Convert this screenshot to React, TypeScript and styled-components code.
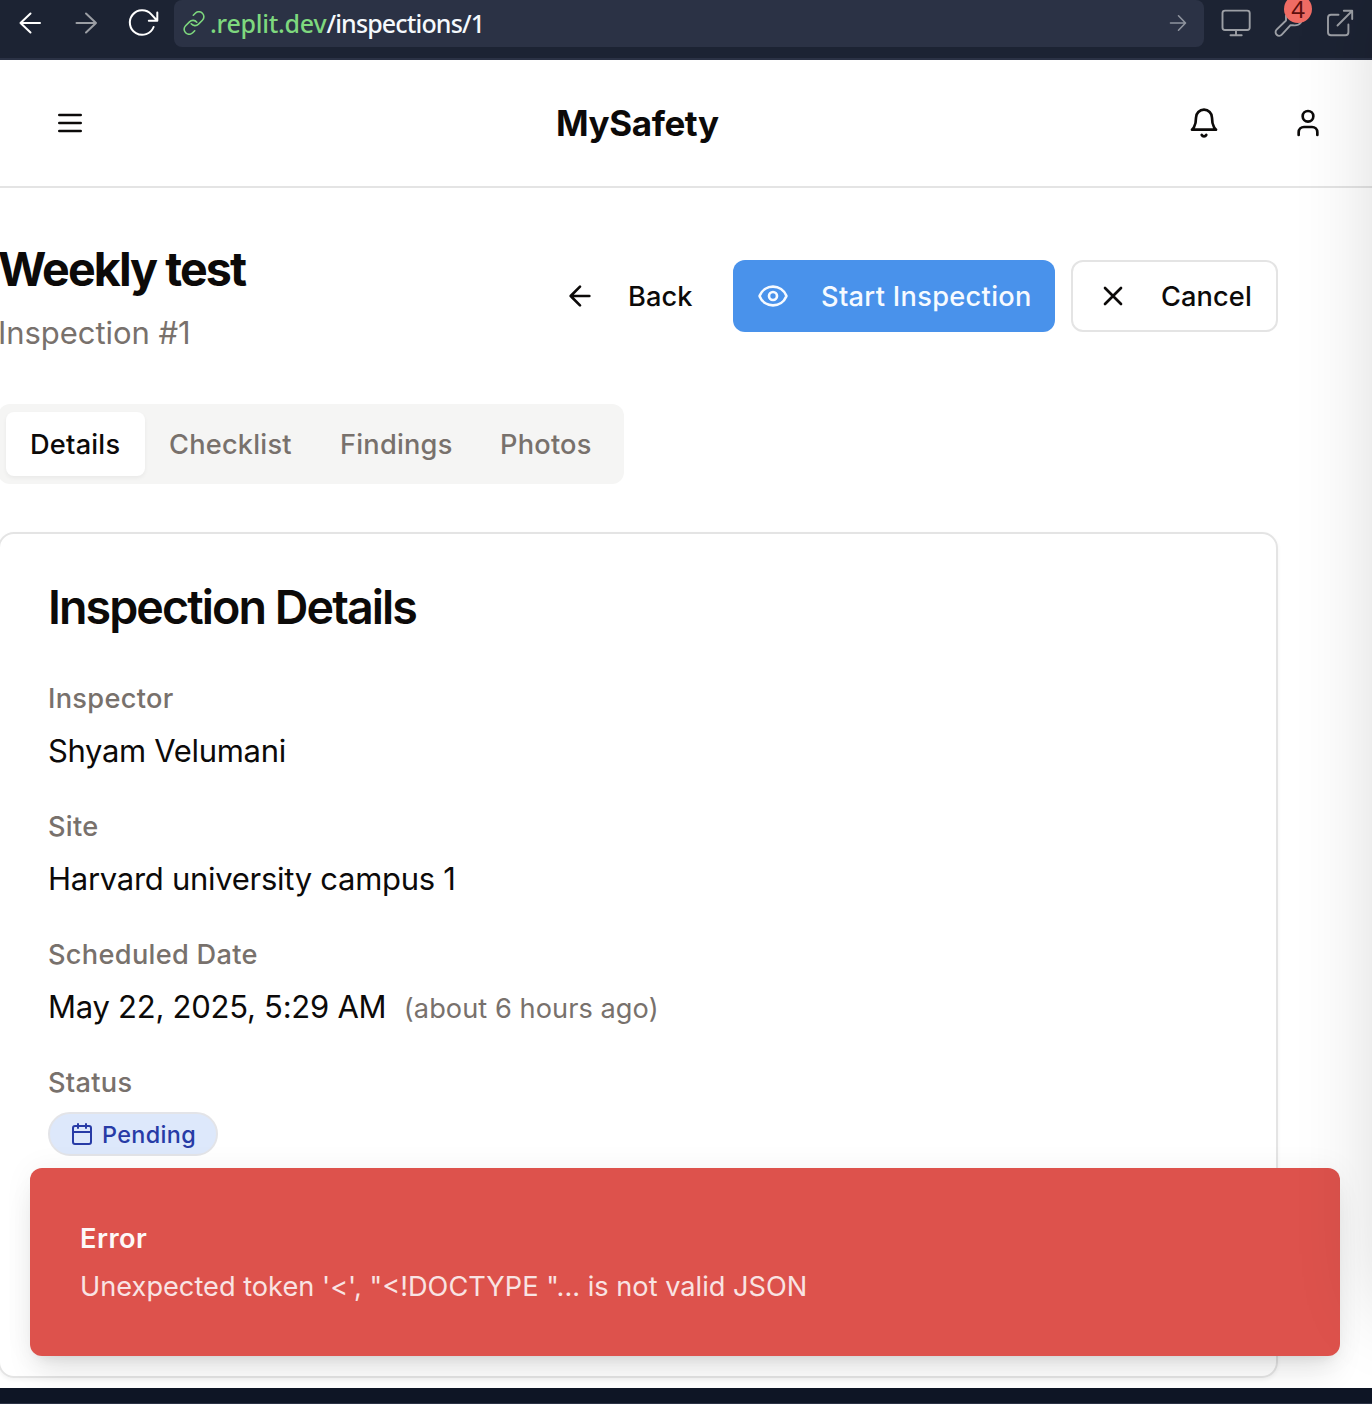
import React from "react";
import styled, { createGlobalStyle } from "styled-components";

const ink = "#0c0a09";
const muted = "#78716c";
const line = "#e4e4e4";

const GlobalStyle = createGlobalStyle`
  * { box-sizing: border-box; }
  html, body { margin: 0; padding: 0; overflow: hidden; background: #fff; }
  body { font-family: Inter, "Liberation Sans", sans-serif; color: ${ink}; }
  h1, h2, p { margin: 0; }
  button { font: inherit; color: inherit; margin: 0; }
  svg { display: block; flex: none; }
`;

const Screen = styled.div`
  position: relative;
  width: 1372px;
  height: 1404px;
  overflow: hidden;
  display: flex;
  flex-direction: column;
`;

const BrowserBar = styled.div`
  height: 60px;
  flex: none;
  display: flex;
  align-items: flex-start;
  background: #1c2333;
  border-bottom: 2px solid #2b3245;
`;

const NavButtons = styled.div`
  display: flex;
  width: 174px;
  height: 47px;
  color: #fff;
`;

const AddressField = styled.div`
  width: 1030px;
  height: 47px;
  display: flex;
  align-items: center;
  padding: 0 16px 1px 8px;
  background: #2b3245;
  border-radius: 8px;
`;

const Address = styled.div`
  flex: 1;
  margin-left: 4px;
  font-family: "Noto Sans", sans-serif;
  font-size: 25px;
  line-height: 34px;
  font-weight: 500;
  letter-spacing: -0.85px;
  color: #f5f9fc;
  white-space: nowrap;
`;

const Host = styled.span`
  color: #7ed87e;
  letter-spacing: -0.25px;
`;

const Tools = styled.div`
  position: relative;
  display: flex;
  height: 47px;
`;

const CountBadge = styled.span`
  position: absolute;
  left: 80px;
  top: -5px;
  width: 28px;
  height: 28px;
  border-radius: 50%;
  background: #ef6c64;
  color: #5c0f0d;
  font-family: "Noto Sans", sans-serif;
  font-size: 24px;
  line-height: 28px;
  text-align: center;
`;

const AppHeader = styled.header`
  height: 128px;
  flex: none;
  display: flex;
  align-items: center;
  padding: 2px 48px 2px 54px;
  border-bottom: 2px solid ${line};
`;

const Brand = styled.div`
  flex: 1;
  margin-left: 470px;
  font-size: 35px;
  line-height: 56px;
  font-weight: 700;
  letter-spacing: -0.41px;
`;

const HeaderIcons = styled.div`
  display: flex;
  gap: 72px;
`;

const Page = styled.main`
  flex: 1;
  min-height: 0;
  width: 1280px;
  margin-left: -2px;
  padding: 48px 0 10px;
  display: flex;
  flex-direction: column;
  gap: 48px;
`;

const TitleRow = styled.div`
  display: flex;
  align-items: center;
  justify-content: space-between;
  height: 120px;
`;

const TitleBlock = styled.div`
  display: flex;
  flex-direction: column;
  gap: 8px;
  padding-top: 1px;
`;

const Title = styled.h1`
  font-size: 46.6px;
  line-height: 64px;
  font-weight: 700;
  letter-spacing: -1.92px;
  white-space: nowrap;
`;

const Subtitle = styled.p`
  font-size: 31px;
  line-height: 48px;
  letter-spacing: -0.05px;
  color: ${muted};
`;

const Actions = styled.div`
  display: flex;
  gap: 16px;
`;

const Button = styled.button<{ $kind: "ghost" | "primary" | "outline"; $w: number; $track: number }>`
  display: flex;
  align-items: center;
  gap: 32px;
  width: ${(p) => p.$w}px;
  height: 72px;
  padding: 0 ${(p) => (p.$kind === "ghost" ? 24 : 22)}px 0 24px;
  border-radius: 12px;
  border: ${(p) => (p.$kind === "outline" ? `2px solid ${line}` : "0")};
  background: ${(p) => (p.$kind === "primary" ? "#4992eb" : "transparent")};
  color: ${(p) => (p.$kind === "primary" ? "#f6faff" : ink)};
  font-size: 27.2px;
  line-height: 40px;
  font-weight: 500;
  letter-spacing: ${(p) => p.$track}px;
  white-space: nowrap;
`;

const ButtonLabel = styled.span`
  padding-top: 2px;
`;

const TabList = styled.div`
  display: flex;
  flex: none;
  width: 626px;
  height: 80px;
  padding: 8px;
  border-radius: 12px;
  background: #f5f5f4;
`;

const Tab = styled.button<{ $active?: boolean; $w: number }>`
  width: ${(p) => p.$w}px;
  height: 64px;
  padding: 2px 0 0 24px;
  border: 0;
  border-radius: 8px;
  text-align: left;
  font-size: 27.2px;
  line-height: 40px;
  font-weight: 500;
  letter-spacing: 0.22px;
  white-space: nowrap;
  color: ${(p) => (p.$active ? ink : muted)};
  background: ${(p) => (p.$active ? "#fff" : "transparent")};
  box-shadow: ${(p) => (p.$active ? "0 2px 4px rgba(0,0,0,.05)" : "none")};
`;

const Card = styled.section`
  height: 846px;
  flex: none;
  padding: 48px;
  border: 2px solid ${line};
  border-radius: 16px;
  box-shadow: 0 2px 4px rgba(0, 0, 0, 0.05);
`;

const CardTitle = styled.h2`
  padding-top: 1px;
  font-size: 46.6px;
  line-height: 48px;
  font-weight: 600;
  letter-spacing: -1.93px;
  margin-bottom: 48px;
`;

const Fields = styled.div`
  display: flex;
  flex-direction: column;
  gap: 32px;
`;

const Field = styled.div`
  display: flex;
  flex-direction: column;
  align-items: flex-start;
  gap: 8px;
`;

const Label = styled.div`
  font-size: 27.2px;
  line-height: 40px;
  font-weight: 500;
  letter-spacing: 0.3px;
  color: ${muted};
`;

const Value = styled.div<{ $track: number }>`
  height: 48px;
  font-size: 31px;
  line-height: 48px;
  letter-spacing: ${(p) => p.$track}px;
  white-space: nowrap;
`;

const Ago = styled.span`
  margin-left: 17.5px;
  font-size: 27.2px;
  line-height: 40px;
  letter-spacing: 0.05px;
  color: ${muted};
`;

const StatusPill = styled.span`
  display: flex;
  align-items: center;
  gap: 8px;
  width: 170px;
  height: 44px;
  margin-top: 1px;
  padding-left: 20px;
  border: 2px solid #e3e4e8;
  border-radius: 22px;
  background: #dde8fb;
  color: #273ba6;
  font-size: 23.4px;
  font-weight: 500;
  letter-spacing: 0.36px;
`;

const Toast = styled.div`
  position: absolute;
  left: 30px;
  top: 1168px;
  width: 1310px;
  height: 188px;
  padding: 51px 50px 49px;
  border-radius: 12px;
  display: flex;
  flex-direction: column;
  gap: 8px;
  background: #dd524c;
  color: #fdf8f8;
  box-shadow: 0 20px 30px -6px rgba(0, 0, 0, 0.1), 0 8px 12px -8px rgba(0, 0, 0, 0.1), 0 0 30px rgba(0, 0, 0, 0.05);
  font-size: 27.2px;
  line-height: 40px;
`;

const ToastTitle = styled.div`
  font-weight: 600;
  letter-spacing: 0.45px;
`;

const ToastText = styled.div`
  opacity: 0.88;
  letter-spacing: 0;
  white-space: nowrap;
`;

const EdgeShade = styled.div`
  position: absolute;
  inset: 0;
  overflow: hidden;
  pointer-events: none;
  &::after {
    content: "";
    position: absolute;
    left: calc(100% + 6px);
    top: -20px;
    width: 200px;
    height: 1330px;
    box-shadow: 0 0 84px rgba(0, 0, 0, 0.16);
  }
`;

const BottomBar = styled.footer`
  height: 16px;
  flex: none;
  position: relative;
  background: #0e1525;
  border-bottom: 1px solid #2b3245;
`;

type IconProps = { size?: number; stroke?: number; children: React.ReactNode };

const Icon = ({ size = 32, stroke = 2, children }: IconProps) => (
  <svg width={size} height={size} viewBox="0 0 24 24" fill="none" stroke="currentColor" strokeWidth={stroke} strokeLinecap="round" strokeLinejoin="round">
    {children}
  </svg>
);

const BarNavIcons = () => (
  <svg width="174" height="47" viewBox="0 0 174 47" fill="none" stroke="#fff" strokeWidth="2" strokeLinecap="round" strokeLinejoin="round">
    <path d="M40 23H20.5M30.5 13.5L20.5 23L30.5 32.5" />
    <path stroke="#9b9ea4" d="M76.5 23H96M86 13.5L96 23L86 32.5" />
    <path d="M153.6 27A12.3 12.3 0 1 1 151.3 14.3L157 20.5M157.3 12.5V20.8H148.8" />
  </svg>
);

const LinkIcon = () => (
  <svg width="24" height="24" viewBox="0 0 24 24" fill="none" stroke="#7ed87e" strokeWidth="1.6" strokeLinecap="round" strokeLinejoin="round">
    <path d="M9.2 12.8a5 5 0 0 0 7.3.4l3.9-3.9a5 5 0 0 0-7.1-7.1L11.3 4.2" />
    <path d="M14.8 11.2a5 5 0 0 0-7.3-.4L3.6 14.7a5 5 0 0 0 7.1 7.1L12.7 19.8" />
  </svg>
);

const GoIcon = () => (
  <svg width="20" height="20" viewBox="0 0 20 20" fill="none" stroke="#8f949e" strokeWidth="1.6" strokeLinecap="round" strokeLinejoin="round">
    <path d="M2.5 10H17M10.5 2.8L17.5 10L10.5 17.2" />
  </svg>
);

const ToolIcons = () => (
  <svg width="168" height="47" viewBox="1204 0 168 47" fill="none" stroke="#9c9fa5" strokeWidth="1.9" strokeLinecap="round" strokeLinejoin="round">
    <rect x="1222.5" y="10.6" width="27.2" height="19.4" rx="2.5" />
    <path d="M1236 30V35M1230.5 35.2H1241.7" />
    <path d="M1286 15.5V20.5L1276.6 29.6A3.6 3.6 0 0 0 1281.8 34.6L1290.5 25.2H1293C1296 25.8 1299 24.8 1301 22.5" />
    <path d="M1338.5 14.8H1331A3 3 0 0 0 1328 17.8V32.2A3 3 0 0 0 1331 35.2H1345.4A3 3 0 0 0 1348.4 32.2V24.5M1337.5 25.5L1352 11M1343.8 10.8H1352.2V19" />
  </svg>
);

export default function App() {
  return (
    <>
      <GlobalStyle />
      <Screen>
        <BrowserBar>
          <NavButtons>
            <BarNavIcons />
          </NavButtons>
          <AddressField>
            <LinkIcon />
            <Address>
              <Host>.replit.dev</Host>/inspections/1
            </Address>
            <GoIcon />
          </AddressField>
          <Tools>
            <ToolIcons />
            <CountBadge>4</CountBadge>
          </Tools>
        </BrowserBar>

        <AppHeader>
          <Icon><path d="M4 6h16M4 12h16M4 18h16" /></Icon>
          <Brand>MySafety</Brand>
          <HeaderIcons>
            <Icon>
              <path d="M6 8a6 6 0 0 1 12 0c0 7 3 9 3 9H3s3-2 3-9" />
              <path d="M10.3 21a1.94 1.94 0 0 0 3.4 0" />
            </Icon>
            <Icon>
              <path d="M19 21v-2a4 4 0 0 0-4-4H9a4 4 0 0 0-4 4v2" />
              <circle cx="12" cy="7" r="4" />
            </Icon>
          </HeaderIcons>
        </AppHeader>

        <Page>
          <TitleRow>
            <TitleBlock>
              <Title>Weekly test</Title>
              <Subtitle>Inspection #1</Subtitle>
            </TitleBlock>
            <Actions>
              <Button $kind="ghost" $w={177} $track={0.05}>
                <Icon><path d="m12 19-7-7 7-7M19 12H5" /></Icon>
                <ButtonLabel>Back</ButtonLabel>
              </Button>
              <Button $kind="primary" $w={322} $track={0.32}>
                <Icon>
                  <path d="M2.062 12.348a1 1 0 0 1 0-.696 10.75 10.75 0 0 1 19.876 0 1 1 0 0 1 0 .696 10.75 10.75 0 0 1-19.876 0" />
                  <circle cx="12" cy="12" r="3" />
                </Icon>
                <ButtonLabel>Start Inspection</ButtonLabel>
              </Button>
              <Button $kind="outline" $w={207} $track={0.1}>
                <Icon><path d="M18 6 6 18M6 6l12 12" /></Icon>
                <ButtonLabel>Cancel</ButtonLabel>
              </Button>
            </Actions>
          </TitleRow>

          <TabList>
            <Tab $active $w={139}>Details</Tab>
            <Tab $w={171}>Checklist</Tab>
            <Tab $w={160}>Findings</Tab>
            <Tab $w={140}>Photos</Tab>
          </TabList>

          <Card>
            <CardTitle>Inspection Details</CardTitle>
            <Fields>
              <Field>
                <Label>Inspector</Label>
                <Value $track={-0.33}>Shyam Velumani</Value>
              </Field>
              <Field>
                <Label>Site</Label>
                <Value $track={-0.28}>Harvard university campus 1</Value>
              </Field>
              <Field>
                <Label>Scheduled Date</Label>
                <Value $track={-0.25}>
                  May 22, 2025, 5:29 AM<Ago>(about 6 hours ago)</Ago>
                </Value>
              </Field>
              <Field>
                <Label>Status</Label>
                <StatusPill>
                  <Icon size={24}>
                    <path d="M8 2v4M16 2v4M3 10h18" />
                    <rect width="18" height="18" x="3" y="4" rx="2" />
                  </Icon>
                  Pending
                </StatusPill>
              </Field>
            </Fields>
          </Card>
        </Page>

        <Toast>
          <ToastTitle>Error</ToastTitle>
          <ToastText>Unexpected token '&lt;', "&lt;!DOCTYPE "... is not valid JSON</ToastText>
        </Toast>
        <EdgeShade />
        <BottomBar />
      </Screen>
    </>
  );
}
